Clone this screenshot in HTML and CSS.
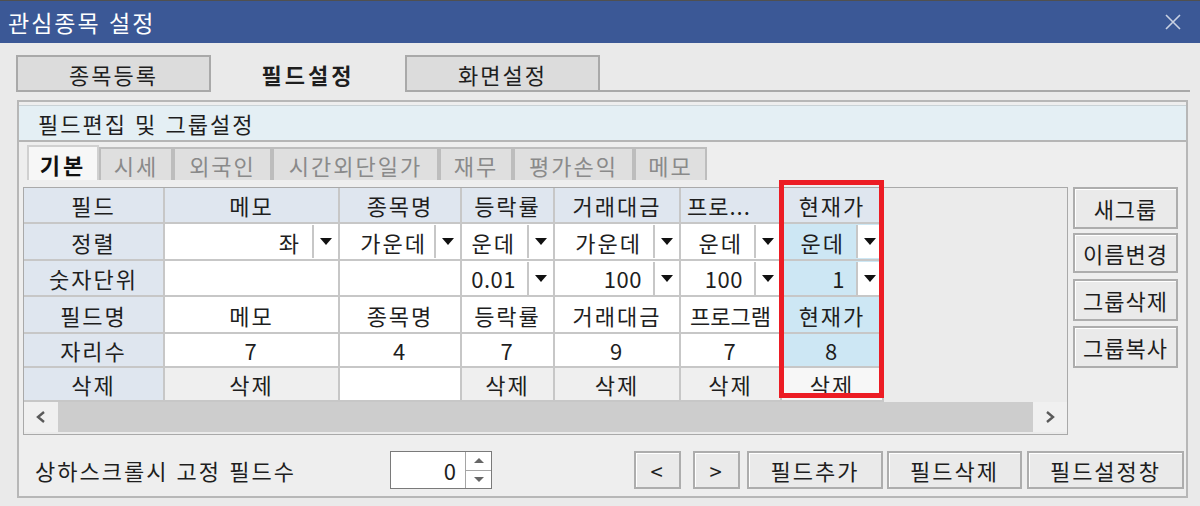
FILE: index.html
```html
<!DOCTYPE html>
<html lang="ko">
<head>
    <meta charset="UTF-8">
    <title>관심종목 설정</title>
    <link rel="stylesheet" href="styles.css">
</head>
<body>
    <div class="titlebar">
        <span class="title">관심종목 설정</span>
        <svg class="close" width="18" height="18" viewBox="0 0 18 18"><path d="M2 2 L16 16 M16 2 L2 16" stroke="#c9d1e3" stroke-width="1.6" fill="none"/></svg>
    </div>

    <div class="dialog">
        <div class="main-tabs">
            <div class="mtab">종목등록</div>
            <div class="mtab active">필드설정</div>
            <div class="mtab">화면설정</div>
        </div>

        <div class="group">
            <div class="group-head">필드편집 및 그룹설정</div>

            <div class="sub-tabs">
                <div class="stab active w-basic">기본</div>
                <div class="stab w-price">시세</div>
                <div class="stab w-foreign">외국인</div>
                <div class="stab w-after">시간외단일가</div>
                <div class="stab w-fin">재무</div>
                <div class="stab w-eval">평가손익</div>
                <div class="stab w-memo">메모</div>
            </div>

            <div class="editor">
                <div class="grid-panel">
                    <table class="grid">
                        <colgroup>
                            <col class="c-label"><col class="c-memo"><col class="c-name"><col class="c-rate"><col class="c-amount"><col class="c-prog"><col class="c-cur">
                        </colgroup>
                        <tr class="r-head">
                            <th>필드</th><th>메모</th><th>종목명</th><th>등락률</th><th>거래대금</th><th class="ellip">프로...</th><th>현재가</th>
                        </tr>
                        <tr class="r-align">
                            <th>정렬</th>
                            <td class="combo"><div class="cb"><span class="cb-val">좌</span><span class="cb-btn"></span></div></td>
                            <td class="combo"><div class="cb"><span class="cb-val tight">가운데</span><span class="cb-btn"></span></div></td>
                            <td class="combo"><div class="cb"><span class="cb-val">운데</span><span class="cb-btn"></span></div></td>
                            <td class="combo"><div class="cb"><span class="cb-val">가운데</span><span class="cb-btn"></span></div></td>
                            <td class="combo"><div class="cb"><span class="cb-val">운데</span><span class="cb-btn"></span></div></td>
                            <td class="combo cur"><div class="cb"><span class="cb-val">운데</span><span class="cb-btn"></span></div></td>
                        </tr>
                        <tr class="r-unit">
                            <th>숫자단위</th>
                            <td></td>
                            <td></td>
                            <td class="combo"><div class="cb"><span class="cb-val num">0.01</span><span class="cb-btn"></span></div></td>
                            <td class="combo"><div class="cb"><span class="cb-val num">100</span><span class="cb-btn"></span></div></td>
                            <td class="combo"><div class="cb"><span class="cb-val num">100</span><span class="cb-btn"></span></div></td>
                            <td class="combo cur"><div class="cb"><span class="cb-val num">1</span><span class="cb-btn"></span></div></td>
                        </tr>
                        <tr class="r-title">
                            <th>필드명</th><td>메모</td><td>종목명</td><td>등락률</td><td>거래대금</td><td class="squeeze">프로그램</td><td class="cur">현재가</td>
                        </tr>
                        <tr class="r-digits">
                            <th>자리수</th><td>7</td><td>4</td><td>7</td><td>9</td><td>7</td><td class="cur">8</td>
                        </tr>
                        <tr class="r-del">
                            <th>삭제</th><td class="del">삭제</td><td></td><td class="del">삭제</td><td class="del">삭제</td><td class="del">삭제</td><td class="del cur-del">삭제</td>
                        </tr>
                    </table>

                    <div class="hilite"></div>

                    <div class="hscroll">
                        <div class="sb-arrow"><svg width="12" height="14" viewBox="0 0 12 14"><path d="M9 2 L3 7 L9 12" stroke="#5a5a5a" stroke-width="2.4" fill="none"/></svg></div>
                        <div class="sb-track"></div>
                        <div class="sb-arrow"><svg width="12" height="14" viewBox="0 0 12 14"><path d="M3 2 L9 7 L3 12" stroke="#5a5a5a" stroke-width="2.4" fill="none"/></svg></div>
                    </div>
                </div>

                <div class="side-btns">
                    <div class="btn b-new">새그룹</div>
                    <div class="btn b-rename">이름변경</div>
                    <div class="btn b-delete">그룹삭제</div>
                    <div class="btn b-copy">그룹복사</div>
                </div>
            </div>

            <div class="footer">
                <span class="fix-label">상하스크롤시 고정 필드수</span>
                <div class="spin">
                    <span class="spin-val">0</span>
                    <div class="spin-btns">
                        <span class="spin-up"></span>
                        <span class="spin-down"></span>
                    </div>
                </div>
                <div class="btn f-prev">&lt;</div>
                <div class="btn f-next">&gt;</div>
                <div class="btn f-add">필드추가</div>
                <div class="btn f-del">필드삭제</div>
                <div class="btn f-set">필드설정창</div>
            </div>
        </div>
    </div>
</body>
</html>
```

FILE: styles.css
```css
* {
    box-sizing: border-box;
}
body {
    margin: 0;
    width: 1200px;
    height: 506px;
    overflow: hidden;
    background-color: #eaeaea;
    font-family: "Noto Sans CJK KR", "Noto Sans", sans-serif;
    font-size: 22px;
    letter-spacing: 2px;
    color: #1e1e1e;
}

/* title bar */
.titlebar {
    height: 43px;
    background-color: #3b5896;
    border-top: 1px solid #505050;
    display: flex;
    align-items: center;
    justify-content: space-between;
    padding: 0 18px 0 8px;
}
.title {
    color: #ffffff;
    font-size: 23px;
    letter-spacing: 2px;
}
.close {
    display: block;
}

.dialog {
    padding: 12px 12px 0 16px;
}

/* main tabs */
.main-tabs {
    display: flex;
    height: 37px;
    border-bottom: 2px solid #a9a9a9;
    width: 1174px;
}
.mtab {
    width: 195px;
    height: 37px;
    display: flex;
    align-items: center;
    justify-content: center;
    background-color: #dcdcdc;
    border: 2px solid #a9a9a9;
}
.mtab.active {
    width: 194px;
    background-color: #eaeaea;
    border-color: #eaeaea;
    font-weight: bold;
    letter-spacing: 3px;
}

/* group box */
.group {
    margin-top: 8px;
    margin-left: 1px;
    width: 1171px;
    height: 398px;
    border: 2px solid #b7b7b7;
    background-color: #eeeeee;
}
.group-head {
    margin-top: 3px;
    height: 37px;
    background-color: #e4eff4;
    border-top: 1px solid #c9d2d6;
    border-bottom: 2px solid #b5b5b5;
    padding-left: 19px;
    display: flex;
    align-items: center;
}

/* sub tabs */
.sub-tabs {
    display: flex;
    margin: 5px 0 0 8px;
    height: 33px;
    align-items: flex-end;
}
.stab {
    height: 33px;
    display: flex;
    align-items: center;
    justify-content: center;
    background-color: #dfdfdf;
    border: 2px solid #bdbdbd;
    border-bottom: none;
    color: #8a8a8a;
}
.stab.active {
    height: 35px;
    background-color: #f7f7f7;
    color: #111;
    font-weight: bold;
    letter-spacing: 3px;
    border-color: #d0d0d0;
}
.w-basic { width: 72px; }
.w-price { width: 74px; }
.w-foreign { width: 99px; }
.w-after { width: 167px; }
.w-fin { width: 74px; }
.w-eval { width: 121px; }
.w-memo { width: 73px; }

/* grid + side buttons */
.editor {
    display: flex;
    margin-top: 7px;
    padding-left: 4px;
}
.grid-panel {
    position: relative;
    width: 1045px;
    height: 248px;
    border: 1px solid #a9a9a9;
    background-color: #ebebeb;
    display: flex;
    flex-direction: column;
}
.grid {
    border-collapse: collapse;
    table-layout: fixed;
    width: 859px;
}
.c-label { width: 140px; }
.c-memo { width: 175px; }
.c-name { width: 122px; }
.c-rate { width: 93px; }
.c-amount { width: 126px; }
.c-prog { width: 101px; }
.c-cur { width: 102px; }

.grid th, .grid td {
    border: 2px solid #c7c7c7;
    padding: 0;
    text-align: center;
    white-space: nowrap;
    overflow: hidden;
    font-weight: normal;
    background-color: #ffffff;
}
.grid th {
    background-color: #dfe6ef;
}
.grid tr:first-child th, .grid tr:first-child td {
    border-top: none;
}
.grid tr th:first-child {
    border-left: none;
}
.r-head { height: 35px; }
.r-align { height: 37px; }
.r-unit { height: 36px; }
.r-title { height: 37px; }
.r-digits { height: 33px; }
.r-del { height: 34px; }

.grid td.cur {
    background-color: #cde7f4;
}
.grid td.del {
    background-color: #efefef;
}
.grid td.cur-del {
    background-color: #f7f7f7;
}
.grid td.squeeze {
    letter-spacing: 0;
}
.grid th.ellip {
    text-align: left;
    padding-left: 6px;
    letter-spacing: 1px;
}

.cb {
    display: flex;
    height: 33px;
}
.cb-val {
    flex: 1;
    display: flex;
    justify-content: flex-end;
    align-items: center;
    overflow: hidden;
    padding-right: 11px;
    min-width: 0;
}
.cb-val.tight {
    padding-right: 7px;
}
.cb-val.num {
    letter-spacing: 0.5px;
}
.cb-btn {
    width: 26px;
    flex: none;
    background-color: #ffffff;
    border-left: 2px solid #c7c7c7;
    display: flex;
    align-items: center;
    justify-content: center;
}
.cb-btn::after {
    content: "";
    border-left: 6px solid transparent;
    border-right: 6px solid transparent;
    border-top: 7px solid #111;
}

/* highlight annotation around the 현재가 column */
.hilite {
    position: absolute;
    left: 755px;
    top: -8px;
    width: 105px;
    height: 218px;
    border: 5px solid #ec1c24;
}

.hscroll {
    margin-top: auto;
    margin-bottom: 2px;
    height: 31px;
    display: flex;
}
.sb-arrow {
    width: 34px;
    background-color: #f0f0f0;
    display: flex;
    align-items: center;
    justify-content: center;
}
.sb-track {
    flex: 1;
    background-color: #cdcdcd;
}

.side-btns {
    margin-left: 5px;
    width: 105px;
    display: flex;
    flex-direction: column;
}
.btn {
    display: flex;
    align-items: center;
    justify-content: center;
    background-color: #eaeaea;
    border: 2px solid #adadad;
    box-shadow: inset 1px 1px 0 #ffffff;
}
.side-btns .btn {
    letter-spacing: 1px;
}
.b-new { height: 42px; }
.b-rename { height: 40px; margin-top: 4px; }
.b-delete { height: 42px; margin-top: 6px; }
.b-copy { height: 42px; margin-top: 5px; }

/* footer */
.footer {
    display: flex;
    align-items: center;
    margin-top: 16px;
    padding-left: 16px;
    height: 38px;
}
.fix-label {
    width: 355px;
}
.spin {
    width: 102px;
    height: 38px;
    display: flex;
    background-color: #ffffff;
    border: 1px solid #7a7a7a;
}
.spin-val {
    flex: 1;
    text-align: right;
    padding-right: 7px;
    line-height: 36px;
}
.spin-btns {
    width: 26px;
    border-left: 1px solid #a5a5a5;
    display: flex;
    flex-direction: column;
}
.spin-up, .spin-down {
    flex: 1;
    display: flex;
    align-items: center;
    justify-content: center;
}
.spin-up {
    border-bottom: 1px solid #a5a5a5;
}
.spin-up::after {
    content: "";
    border-left: 5px solid transparent;
    border-right: 5px solid transparent;
    border-bottom: 5px solid #666;
}
.spin-down::after {
    content: "";
    border-left: 5px solid transparent;
    border-right: 5px solid transparent;
    border-top: 5px solid #666;
}
.footer .btn {
    height: 38px;
}
.f-prev { width: 47px; margin-left: 142px; }
.f-next { width: 47px; margin-left: 12px; }
.f-add { width: 136px; margin-left: 7px; }
.f-del { width: 135px; margin-left: 4px; }
.f-set { width: 157px; margin-left: 5px; }
```
